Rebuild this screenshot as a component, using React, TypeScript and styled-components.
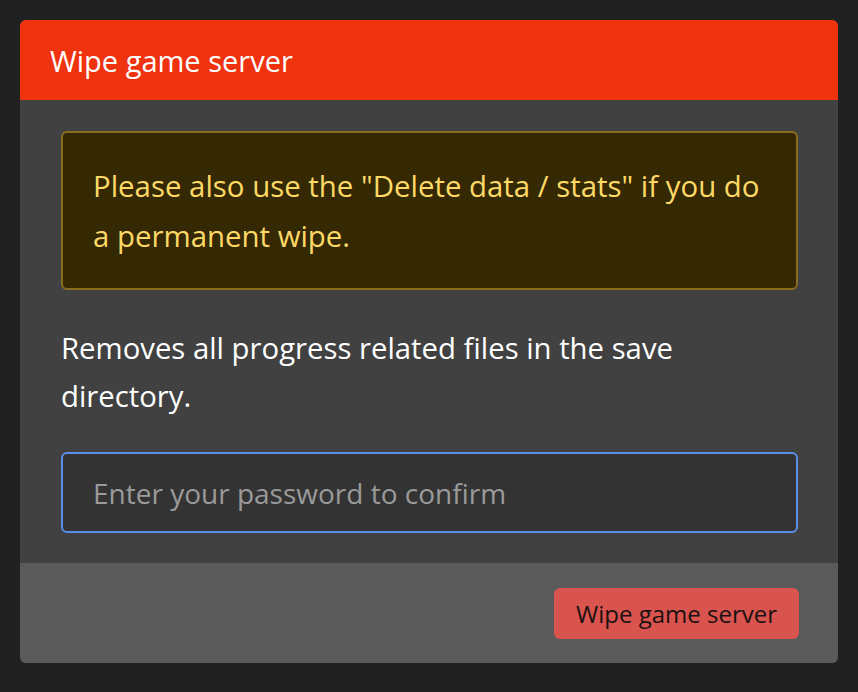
import React from "react";
import styled, { createGlobalStyle } from "styled-components";

const Global = createGlobalStyle`
  html, body { margin: 0; padding: 0; background: #212121; }
  body { font-family: "Open Sans", "Noto Sans", sans-serif; }
  * { box-sizing: border-box; }
`;

const Page = styled.div`
  padding: 20px;
  background: #212121;
  min-height: 692px;
`;

const Card = styled.div`
  width: 818px;
  border-radius: 6px;
  overflow: hidden;
  background: #414141;
`;

const Header = styled.div`
  height: 80px;
  background: #f0330f;
  display: flex;
  align-items: center;
  padding: 0 30px;
`;

const Title = styled.h2`
  margin: 0;
  font-size: 29px;
  font-weight: 400;
  color: #ffffff;
`;

const Body = styled.div`
  padding: 31px 40px 30px 41px;
  display: flex;
  flex-direction: column;
`;

const Alert = styled.div`
  border: 2px solid #8a6c1e;
  background: #352904;
  border-radius: 6px;
  padding: 28px 30px 27px;
  color: #ffd966;
  font-size: 29.4px;
  line-height: 50px;
`;

const Text = styled.p`
  margin: 34px 0 0;
  color: #ffffff;
  font-size: 29.3px;
  line-height: 48px;
`;

const Input = styled.input`
  margin-top: 32px;
  height: 81px;
  border: 2px solid #5b8ee6;
  border-radius: 6px;
  background: #333333;
  padding: 0 30px;
  font-family: inherit;
  font-size: 28px;
  color: #fff;
  outline: none;
  &::placeholder { color: #9a9a9a; }
`;

const Footer = styled.div`
  height: 100px;
  background: #5a5a5a;
  display: flex;
  justify-content: flex-end;
  align-items: center;
  padding: 0 39px;
`;

const Button = styled.button`
  height: 51px;
  padding: 0 22px;
  border: none;
  border-radius: 6px;
  background: #d9534f;
  color: #1a1111;
  font-family: inherit;
  font-size: 24px;
  cursor: pointer;
`;

export default function App() {
  return (
    <>
      <Global />
      <Page>
        <Card>
          <Header>
            <Title>Wipe game server</Title>
          </Header>
          <Body>
            <Alert>
              Please also use the "Delete data / stats" if you do a permanent wipe.
            </Alert>
            <Text>Removes all progress related files in the save directory.</Text>
            <Input type="password" placeholder="Enter your password to confirm" />
          </Body>
          <Footer>
            <Button>Wipe game server</Button>
          </Footer>
        </Card>
      </Page>
    </>
  );
}
